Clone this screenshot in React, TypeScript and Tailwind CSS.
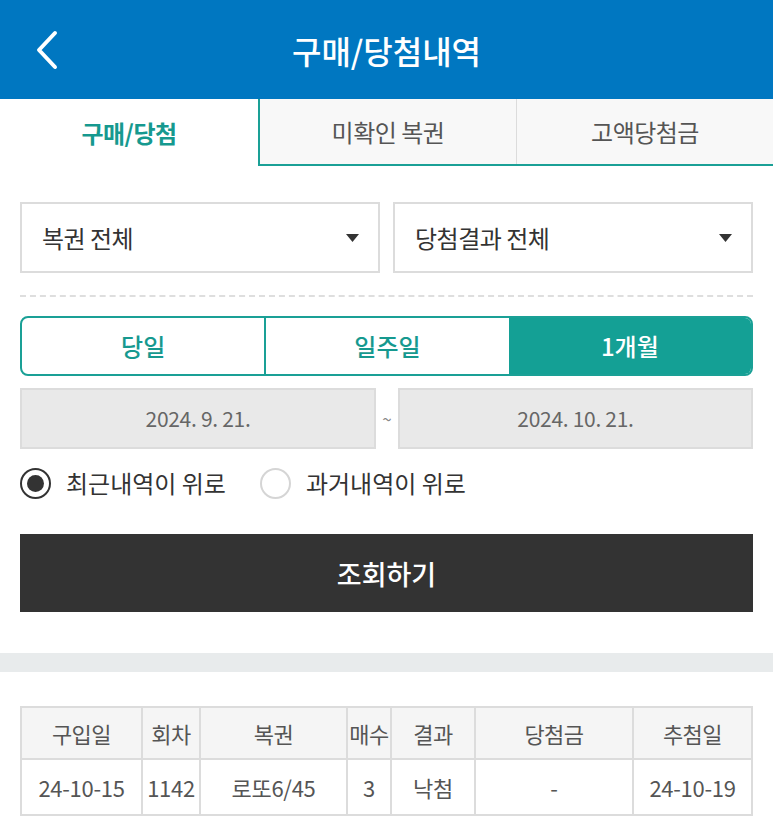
import React from "react";

const FONT = { fontFamily: '"Noto Sans CJK KR", "Noto Sans", sans-serif' };

function Caret() {
  return (
    <svg width="13" height="8" viewBox="0 0 13 8" aria-hidden>
      <path d="M0 0 L13 0 L6.5 8 Z" fill="#333" />
    </svg>
  );
}

function Select({ label }: { label: string }) {
  return (
    <div className="flex h-[71px] flex-1 items-center justify-between border-2 border-[#dcdcdc] bg-white pl-[20px] pr-[19px]">
      <span className="text-[24px] leading-none text-[#333] tracking-[-0.5px]">{label}</span>
      <Caret />
    </div>
  );
}

function Radio({ checked, label }: { checked: boolean; label: string }) {
  return (
    <div className="flex h-[36px] items-center">
      <span
        className={
          checked
            ? "flex h-[31px] w-[31px] items-center justify-center rounded-full border-2 border-[#333] bg-white"
            : "flex h-[31px] w-[31px] items-center justify-center rounded-full border-2 border-[#d5d5d5] bg-white"
        }
      >
        {checked && <span className="h-[17px] w-[17px] rounded-full bg-[#333]" />}
      </span>
      <span className="ml-[15px] text-[24px] leading-none text-[#333]">{label}</span>
    </div>
  );
}

const cols = ["w-[121px]", "w-[58px]", "w-[147px]", "w-[44px]", "w-[84px]", "w-[158px]", "flex-1"];
const head = ["구입일", "회차", "복권", "매수", "결과", "당첨금", "추첨일"];
const row = ["24-10-15", "1142", "로또6/45", "3", "낙첨", "-", "24-10-19"];

export default function App() {
  return (
    <div className="w-[773px] min-h-[827px] bg-white" style={FONT}>
      {/* title bar */}
      <div className="grid h-[99px] grid-cols-[100px_1fr_100px] items-center bg-[#0077c1]">
        <div className="flex pl-[34px]">
          <svg width="26" height="40" viewBox="0 0 26 40" aria-hidden>
            <path d="M21 3 L5 20 L21 37" fill="none" stroke="#fff" strokeWidth="4" strokeLinecap="round" strokeLinejoin="round" />
          </svg>
        </div>
        <h1 className="text-center text-[32px] leading-none font-medium text-white">구매/당첨내역</h1>
        <div />
      </div>

      {/* tabs */}
      <div className="flex h-[67px]">
        <div className="flex w-[258px] items-center justify-center bg-white text-[24px] leading-none font-bold text-[#16998f] tracking-[-0.5px]">
          구매/당첨
        </div>
        <div className="flex w-[258px] items-center justify-center border-b-2 border-l-2 border-[#1aa096] bg-[#f8f8f8] text-[24px] leading-none text-[#555] tracking-[-0.5px]">
          미확인 복권
        </div>
        <div className="flex flex-1 items-center justify-center border-b-2 border-[#1aa096] bg-[#f8f8f8] text-[24px] leading-none text-[#555] tracking-[-0.5px]">
          <div className="flex h-full w-full items-center justify-center border-l border-[#dcdcdc]">고액당첨금</div>
        </div>
      </div>

      <div className="px-[20px]">
        {/* filters */}
        <div className="mt-[36px] flex gap-[13px]">
          <Select label="복권 전체" />
          <Select label="당첨결과 전체" />
        </div>

        <div className="mt-[22px] border-t-2 border-dashed border-[#dedede]" />

        {/* period */}
        <div className="mt-[19px] flex h-[60px] overflow-hidden rounded-[8px] border-2 border-[#1aa096]">
          <div className="flex flex-1 items-center justify-center border-r-2 border-[#1aa096] text-[24px] leading-none font-medium text-[#16998f]">
            당일
          </div>
          <div className="flex flex-1 items-center justify-center text-[24px] leading-none font-medium text-[#16998f]">일주일</div>
          <div className="flex flex-1 items-center justify-center bg-[#14a095] text-[24px] leading-none font-medium text-white">1개월</div>
        </div>

        {/* dates */}
        <div className="mt-[12px] flex items-center">
          <div className="flex h-[61px] w-[356px] items-center justify-center border-2 border-[#dcdcdc] bg-[#e9e9e9] text-[21px] leading-none text-[#666] tracking-[-0.3px]">
            2024. 9. 21.
          </div>
          <span className="flex-1 text-center text-[17px] text-[#888]">~</span>
          <div className="flex h-[61px] w-[355px] items-center justify-center border-2 border-[#dcdcdc] bg-[#e9e9e9] text-[21px] leading-none text-[#666] tracking-[-0.3px]">
            2024. 10. 21.
          </div>
        </div>

        {/* order */}
        <div className="mt-[16px] flex items-center gap-[34px]">
          <Radio checked label="최근내역이 위로" />
          <Radio checked={false} label="과거내역이 위로" />
        </div>

        <button className="mt-[33px] flex h-[78px] w-full items-center justify-center bg-[#333] text-[27px] leading-none font-medium text-white">
          조회하기
        </button>
      </div>

      <div className="mt-[41px] h-[19px] bg-[#e8ebec]" />

      {/* results */}
      <div className="px-[20px] pt-[34px]">
        <div className="border-2 border-[#dcdcdc]">
          <div className="flex h-[50px] bg-[#f5f5f5]">
            {head.map((h, i) => (
              <div
                key={h}
                className={`${cols[i]} flex items-center justify-center text-[22px] leading-none text-[#555] tracking-[-0.5px] ${i < head.length - 1 ? "border-r-2 border-[#dcdcdc]" : ""}`}
              >
                {h}
              </div>
            ))}
          </div>
          <div className="flex h-[56px] border-t-2 border-[#dcdcdc] bg-white">
            {row.map((v, i) => (
              <div
                key={i}
                className={`${cols[i]} flex items-center justify-center text-[22px] leading-none text-[#555] tracking-[-0.3px] ${i < row.length - 1 ? "border-r-2 border-[#dcdcdc]" : ""}`}
              >
                {v}
              </div>
            ))}
          </div>
        </div>
      </div>
    </div>
  );
}
